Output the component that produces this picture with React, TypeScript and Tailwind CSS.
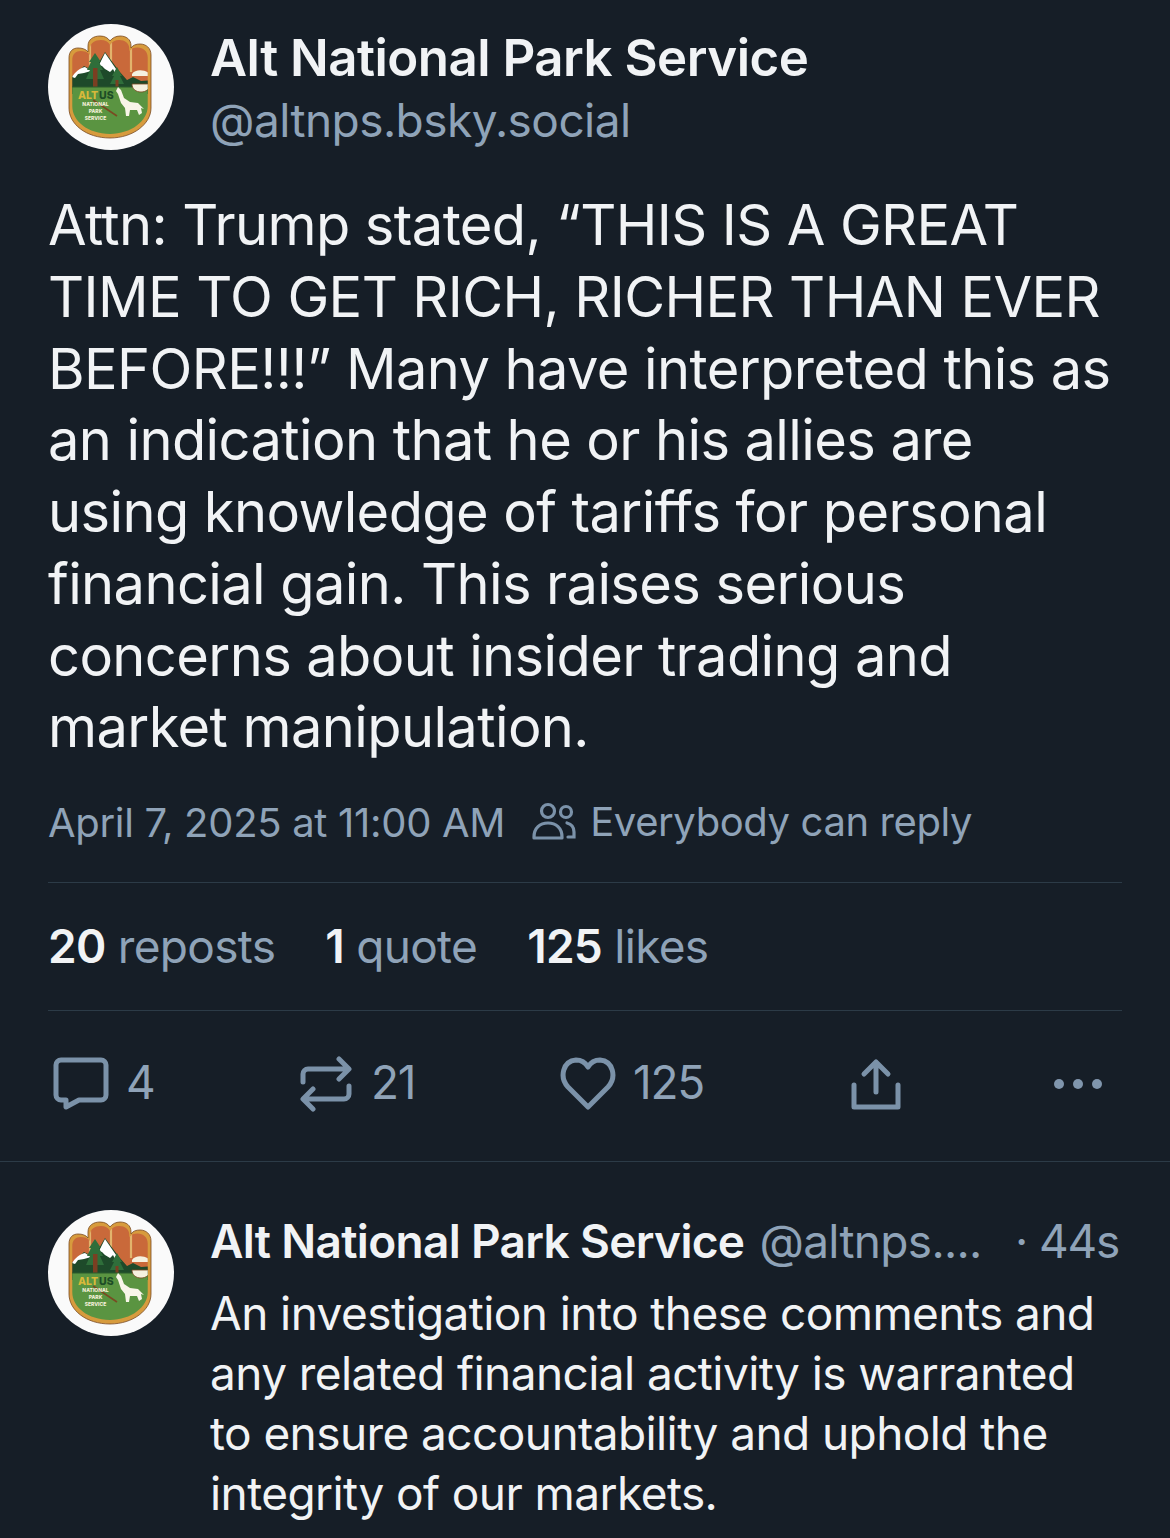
const inter = "font-['Inter','Noto_Sans',sans-serif]"

const badge =
  'M21 34C21 27 25 24 30 24C34 24 38 25 40 28L40 22C40 15 46 12 52 12C57 12 60 14 62 17C64 14 68 12 72 12C78 12 83 15 83 22L83 24C85 21 88 20 92 20C98 20 103 24 103 31L103 84C103 100 85 114 62 114C38 114 21 100 21 84Z'

function Logo() {
  return (
    <svg viewBox="0 0 126 126" className="size-[126px] shrink-0" aria-hidden="true">
      <defs>
        <clipPath id="badge-inner">
          <path d={badge} transform="translate(62 63) scale(.92) translate(-62 -63)" />
        </clipPath>
      </defs>
      <circle cx="63" cy="63" r="63" fill="#fafafa" />
      <path d={badge} fill="#d79b3d" stroke="#7a4a22" strokeWidth=".8" />
      <g clipPath="url(#badge-inner)">
        <rect x="15" y="8" width="95" height="60" fill="#c9693a" />
        {/* finger gaps */}
        <path d="M42 10v40M63 10v34M83 10v38" stroke="#e2b46c" strokeWidth="2.2" />
        {/* snowy mountains and ridge */}
        <path d="M20 56l16-14 10 5 11-19 14 19 8 9 6-3 8 4 15-1v14H20z" fill="#1e4a2a" />
        <path d="M57 29l11 16 5 7-5-1-3-6-3 3-5-3-3-3-3-1z" fill="#ffffff" />
        <path d="M24 53c3-5 8-9 13-10l6 4-7 2-6 1-3 4z" fill="#ffffff" />
        {/* fourth finger snow */}
        <path d="M84 50c3-5 13-5 18 0v2H84z" fill="#f5f1df" />
        {/* trees */}
        <path d="M47 29l6 9h-2l4 8h-3l4 9H38l4-9h-3l4-8h-2z" fill="#2f6e3a" />
        <rect x="45" y="44" width="4.5" height="20" fill="#7a3f22" />
        <path d="M69 43l5 9h-2l4 8H62l4-8h-2z" fill="#2f6e3a" />
        <rect x="67.5" y="56" width="3" height="9" fill="#7a3f22" />
        {/* meadow */}
        <rect x="15" y="63" width="95" height="55" fill="#5a9441" />
        <path d="M15 63h95" stroke="#2a5a2c" strokeWidth="1" />
        <path d="M84 60h18c0 5-4 8-9 8s-9-3-9-8z" fill="#f5f1df" stroke="#7a4a22" strokeWidth=".8" />
        <path d="M45 76l24 16" stroke="#7a4a22" strokeWidth="1.6" />
        {/* wolf */}
        <path d="M70 63l3 3 3 8 6 4 8 1 6 6-3-1 1 5-3 2-2-5-7 0-1 6h-3l-1-8-4-5-3-9-2-3z" fill="#f8f5e8" />
        <text x="30" y="75" fontFamily="Inter, sans-serif" fontSize="10.5" fontWeight="800" fill="#d8b93a">
          ALT
        </text>
        <text x="51" y="75" fontFamily="Inter, sans-serif" fontSize="10.5" fontWeight="800" fill="#1d4c26">
          US
        </text>
        <text x="47.5" y="82" textAnchor="middle" fontFamily="Inter, sans-serif" fontSize="5" fontWeight="800" fill="#f3efd8">
          NATIONAL
        </text>
        <text x="47.5" y="89" textAnchor="middle" fontFamily="Inter, sans-serif" fontSize="5" fontWeight="800" fill="#f3efd8">
          PARK
        </text>
        <text x="47.5" y="95.5" textAnchor="middle" fontFamily="Inter, sans-serif" fontSize="5" fontWeight="800" fill="#f3efd8">
          SERVICE
        </text>
      </g>
    </svg>
  )
}

const iconCls = 'shrink-0 text-[#7b92a9]'

function Stat({ value, label }: { value: string; label: string }) {
  return (
    <span className="tracking-[-0.7px] text-[#8fa3b8]">
      <span className="font-semibold text-[#f1f3f5]">{value}</span> {label}
    </span>
  )
}

export default function App() {
  return (
    <div className={`${inter} h-[1538px] w-[1170px] overflow-hidden bg-[#161e27] text-[#f1f3f5]`}>
      <div className="px-12 pt-6">
        <div className="flex items-start gap-[36px]">
          <Logo />
          <div className="min-w-0 pt-[2px]">
            <div className="text-[51px] leading-[64px] font-semibold tracking-[-0.52px]">Alt National Park Service</div>
            <div className="text-[46px] leading-[60px] tracking-[-0.55px] text-[#8fa3b8]">@altnps.bsky.social</div>
          </div>
        </div>

        <p className="mt-[40px] text-[56px] leading-[71.75px] tracking-[-0.6px] whitespace-nowrap">
          Attn: Trump stated, “THIS IS A GREAT
          <br />
          TIME TO GET RICH, RICHER THAN EVER
          <br />
          BEFORE!!!” Many have interpreted this as
          <br />
          an indication that he or his allies are
          <br />
          using knowledge of tariffs for personal
          <br />
          financial gain. This raises serious
          <br />
          concerns about insider trading and
          <br />
          market manipulation.
        </p>

        <div className="mt-[30px] flex h-[56px] items-center text-[40px] tracking-[-0.3px] text-[#8fa3b8]">
          <span className="translate-y-px">April 7, 2025 at 11:00 AM</span>
          <svg viewBox="0 0 44 40" className={`ml-[27px] h-[40px] w-[44px] ${iconCls} text-[#5f7fa3]`} fill="none" stroke="currentColor" strokeWidth="3.2">
            <circle cx="16" cy="9" r="6.5" />
            <path d="M2 35c0-9 6-14 14-14s14 5 14 14v1H2z" strokeLinejoin="round" />
            <circle cx="34" cy="10" r="5.5" />
            <path d="M35 21c4 1 7 4 7 9v5h-6" strokeLinecap="round" />
          </svg>
          <span className="ml-[14px] tracking-[-0.4px]">Everybody can reply</span>
        </div>

        <div className="mt-[32px] h-px w-[1074px] bg-[#2c3b47]" />

        <div className="flex h-[127px] items-center gap-[50px] text-[46px]">
          <Stat value="20" label="reposts" />
          <Stat value="1" label="quote" />
          <Stat value="125" label="likes" />
        </div>

        <div className="h-px w-[1074px] bg-[#2c3b47]" />

        <div className="flex h-[150px] items-center pb-[4px] text-[46px] tracking-[-1.2px] text-[#8fa3b8]">
          <div className="flex w-[248px] items-center gap-[17px] pl-[5px]">
            <svg viewBox="0 0 56 54" className={`h-[54px] w-[56px] ${iconCls}`} fill="none" stroke="currentColor" strokeWidth="5" strokeLinejoin="round" strokeLinecap="round">
              <path d="M8 3h40a5 5 0 0 1 5 5v30a5 5 0 0 1-5 5H26L13 50v-7H8a5 5 0 0 1-5-5V8a5 5 0 0 1 5-5z" />
            </svg>
            <span className="-mt-[4px]">4</span>
          </div>
          <div className="flex w-[260px] items-center gap-[19px] pl-[4px]">
            <svg viewBox="0 0 52 56" className={`h-[56px] w-[52px] ${iconCls}`} fill="none" stroke="currentColor" strokeWidth="5" strokeLinejoin="round" strokeLinecap="round">
              <path d="M3 26v-8a5 5 0 0 1 5-5h40M39 3l10 10-10 10" />
              <path d="M49 30v8a5 5 0 0 1-5 5H4M13 33L3 43l10 10" />
            </svg>
            <span className="-mt-[4px]">21</span>
          </div>
          <div className="flex w-[290px] items-center gap-[17px] pl-[4px]">
            <svg viewBox="0 0 56 54" className={`h-[54px] w-[56px] ${iconCls}`} fill="none" stroke="currentColor" strokeWidth="5" strokeLinejoin="round">
              <path d="M28 50L8 30C-1 20 3 4 16 3c5 0 9 2 12 7 3-5 7-7 12-7 13 1 17 17 8 27z" />
            </svg>
            <span className="-mt-[4px]">125</span>
          </div>
          <div className="w-[204px] pl-[5px]">
            <svg viewBox="0 0 50 52" className={`h-[52px] w-[50px] ${iconCls}`} fill="none" stroke="currentColor" strokeWidth="5" strokeLinejoin="round" strokeLinecap="round">
              <path d="M25 34V4M13 16L25 4l12 12" />
              <path d="M3 27v22h44V27" />
            </svg>
          </div>
          <div className="flex gap-[9px] pl-[4px]">
            <span className="size-[10px] rounded-full bg-[#8096ad]" />
            <span className="size-[10px] rounded-full bg-[#8096ad]" />
            <span className="size-[10px] rounded-full bg-[#8096ad]" />
          </div>
        </div>
      </div>

      <div className="h-px w-full bg-[#2c3b47]" />

      <div className="flex gap-[36px] pt-12 pl-12">
        <Logo />
        <div className="min-w-0 flex-1 pr-[51px]">
          <div className="flex h-[62px] items-center text-[46px] tracking-[-0.68px] whitespace-nowrap">
            <span className="font-semibold">Alt National Park Service</span>
            <span className="ml-[15px] text-[#8fa3b8]">@altnps....</span>
            <span className="ml-auto tracking-[-1.2px] text-[#8fa3b8]">· 44s</span>
          </div>
          <p className="mt-[11px] text-[46px] leading-[60px] tracking-[-0.58px] whitespace-nowrap">
            An investigation into these comments and
            <br />
            any related financial activity is warranted
            <br />
            to ensure accountability and uphold the
            <br />
            integrity of our markets.
          </p>
        </div>
      </div>
    </div>
  )
}
